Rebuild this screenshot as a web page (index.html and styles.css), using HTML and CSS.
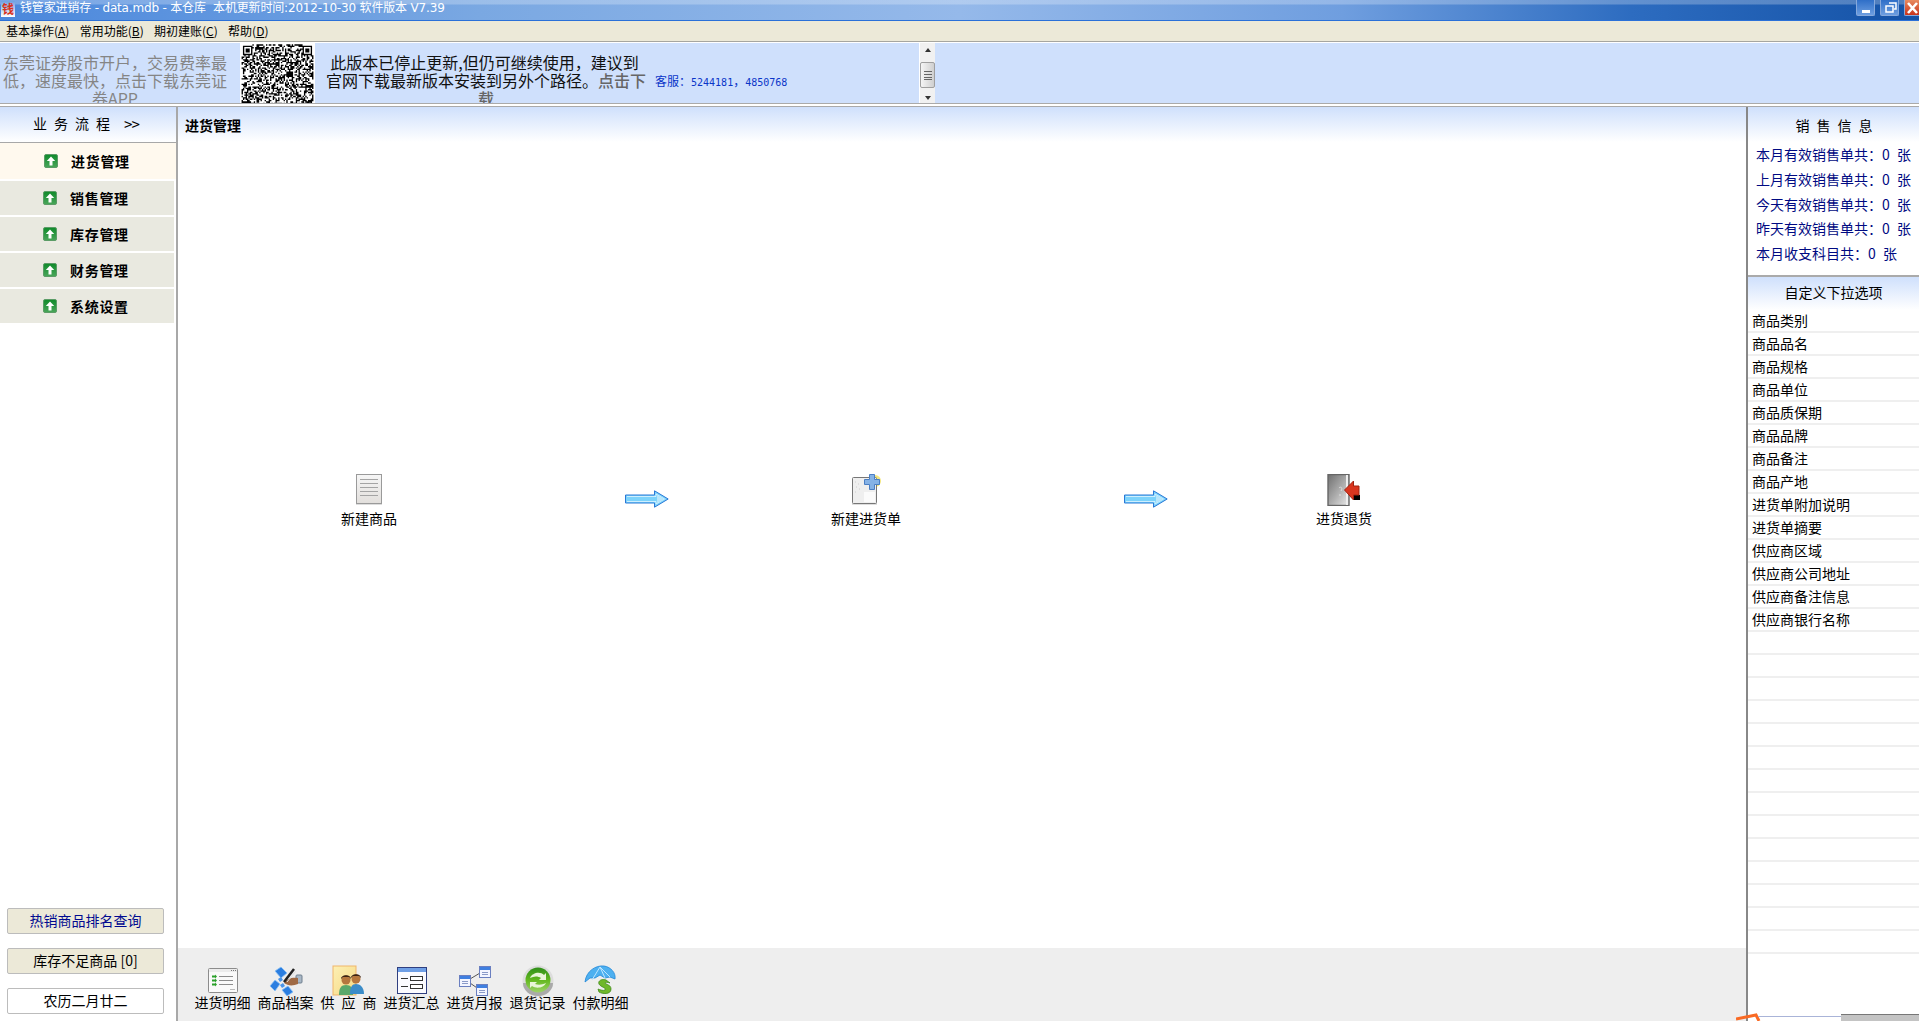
FILE: index.html
```html
<!DOCTYPE html>
<html lang="zh-CN">
<head>
<meta charset="utf-8">
<title>钱管家进销存</title>
<link rel="stylesheet" href="styles.css">
</head>
<body>
<header class="titlebar">
  <span class="app-logo">钱</span>
  <span class="title-text">钱管家进销存 - data.mdb - 本仓库&nbsp; 本机更新时间:2012-10-30 软件版本 V7.39</span>
  <div class="win-buttons">
    <span class="win-btn"><svg width="19" height="16" viewBox="0 0 19 16"><rect x="5" y="10" width="8" height="3" fill="#fff"/></svg></span>
    <span class="win-btn"><svg width="19" height="16" viewBox="0 0 19 16"><path d="M8 3h7v6h-2M5 6h7v6H5z" fill="none" stroke="#fff" stroke-width="1.5"/></svg></span>
    <span class="win-btn win-close"><svg width="15" height="16" viewBox="0 0 15 16"><path d="M3 3l9 10M12 3L3 13" stroke="#fff" stroke-width="2.6"/></svg></span>
  </div>
</header>
<nav class="menubar">
  <span>基本操作(<u>A</u>)</span>
  <span>常用功能(<u>B</u>)</span>
  <span>期初建账(<u>C</u>)</span>
  <span>帮助(<u>D</u>)</span>
</nav>
<section class="adband">
  <div class="ad-left">东莞证券股市开户，交易费率最低，速度最快，点击下载东莞证券APP</div>
  <svg class="qr" id="qr" width="75" height="61" viewBox="0 0 55 45"></svg>
  <div class="ad-mid"><span class="ad-l1">此版本已停止更新,但仍可继续使用，建议到</span><br>官网下载最新版本安装到另外个路径。<span class="ad-link">点击下载</span></div>
  <div class="ad-service">客服：<span class="mono">5244181</span>，<span class="mono">4850768</span></div>
  <div class="ad-scroll">
    <svg width="16" height="14" viewBox="0 0 16 14"><path d="M5 9l3-4 3 4z" fill="#333"/></svg>
    <div class="ad-thumb"><svg width="8" height="9" viewBox="0 0 8 9"><path d="M0 .5h8M0 3.5h8M0 6.5h8M0 8.5h8" stroke="#666"/></svg></div>
    <svg class="ad-down" width="16" height="12" viewBox="0 0 16 12"><path d="M5 4l3 4 3-4z" fill="#333"/></svg>
  </div>
</section>
<main class="workspace">
  <aside class="left">
    <div class="grad-head left-head"><span class="spaced">业务流程</span><span class="chev">&gt;&gt;</span></div>
    <ul class="modules">
      <li class="module active"><svg class="up" width="14" height="14" viewBox="0 0 14 14"><use href="#upicon"/></svg>进货管理</li>
      <li class="module"><svg class="up" width="14" height="14" viewBox="0 0 14 14"><use href="#upicon"/></svg>销售管理</li>
      <li class="module"><svg class="up" width="14" height="14" viewBox="0 0 14 14"><use href="#upicon"/></svg>库存管理</li>
      <li class="module"><svg class="up" width="14" height="14" viewBox="0 0 14 14"><use href="#upicon"/></svg>财务管理</li>
      <li class="module"><svg class="up" width="14" height="14" viewBox="0 0 14 14"><use href="#upicon"/></svg>系统设置</li>
    </ul>
    <div class="left-buttons">
      <div class="lbtn lbtn-blue">热销商品排名查询</div>
      <div class="lbtn">库存不足商品 [0]</div>
      <div class="lbtn lbtn-white">农历二月廿二</div>
    </div>
  </aside>

  <section class="center">
    <div class="grad-head center-head">进货管理</div>
    <div class="flow">
      <div class="flow-item fi-1">
        <svg width="30" height="32" viewBox="0 0 30 32">
          <defs><linearGradient id="g-paper" x1="0" y1="0" x2="0" y2="1"><stop offset="0" stop-color="#f6f6f6"/><stop offset="1" stop-color="#e2dfdc"/></linearGradient></defs>
          <rect x="2" y="29" width="26" height="2" fill="#ddd"/>
          <rect x="2.5" y="0.5" width="25" height="29" fill="url(#g-paper)" stroke="#9a9a9a"/>
          <path d="M6 5.5h18M6 9.5h18M6 13.5h18M6 17.5h18M6 21.5h18" stroke="#a4a4a4"/>
        </svg>
        <span>新建商品</span>
      </div>
      <svg class="flow-arrow fa-1" width="44" height="18" viewBox="0 0 44 18"><use href="#flowarrow"/></svg>
      <div class="flow-item fi-2">
        <svg width="30" height="32" viewBox="0 0 30 32">
          <circle cx="24" cy="7" r="6" fill="#f3e67c"/>
          <rect x="1" y="29" width="25" height="2" fill="#ddd"/>
          <rect x="1.5" y="3.5" width="24" height="26" rx="1" fill="#efefef" stroke="#777"/>
          <rect x="13" y="18" width="11" height="10" fill="#fbfbfb"/>
          <path d="M4 8h1M7 10h1M5 13h1M8 15h1M4 18h1" stroke="#ccc"/>
          <path d="M18.5 .5h5v5h5v5h-5v5h-5v-5h-5v-5h5z" fill="#85b2e6" stroke="#4b7fc4"/>
        </svg>
        <span>新建进货单</span>
      </div>
      <svg class="flow-arrow fa-2" width="44" height="18" viewBox="0 0 44 18"><use href="#flowarrow"/></svg>
      <div class="flow-item fi-3">
        <svg width="34" height="32" viewBox="0 0 34 32">
          <defs><linearGradient id="g-door" x1="0" y1="0" x2="1" y2="1"><stop offset="0" stop-color="#6f6f6f"/><stop offset=".55" stop-color="#b0b0b0"/><stop offset="1" stop-color="#ececec"/></linearGradient></defs>
          <rect x="1" y="0.5" width="21" height="31" fill="url(#g-door)" stroke="#666" stroke-width="1.4"/>
          <path d="M20 1v30" stroke="#eee" stroke-width="2"/>
          <path d="M12 14c2-2 4 0 2 3M13 20v2" stroke="#ddd" fill="none"/>
          <rect x="27" y="21" width="6" height="5" fill="#000"/>
          <path d="M17.500 16l9-9v5h5.500v9h-5.500v5z" fill="#d9361f" stroke="#a12210"/>
        </svg>
        <span>进货退货</span>
      </div>
    </div>
    <div class="toolbar">
      <div class="tool">
        <svg width="32" height="30" viewBox="0 0 32 30">
          <rect x="1.500" y="2.500" width="29" height="24" rx="1" fill="#fafafa" stroke="#8c8c8c"/>
          <path d="M2 3h28v3H2z" fill="#ececec"/><path d="M24 4.500h5" stroke="#777" stroke-dasharray="1 1"/>
          <path d="M12 10.500h14M12 14.500h14M12 18.500h14" stroke="#8d8d8d"/><path d="M23 23.500h5" stroke="#bbb"/>
          <path d="M5 10.500h3M5 14.500h3M5 18.500h3" stroke="#2aa02a" stroke-width="2"/>
          <path d="M8 8.500l2 2-2 2zM8 12.500l2 2-2 2zM8 16.500l2 2-2 2z" fill="#2aa02a"/>
        </svg>
        <span>进货明细</span>
      </div>
      <div class="tool">
        <svg width="34" height="30" viewBox="0 0 34 30">
          <path d="M6 5L12 1l6 6-6 5zM1 20l5-6 5 4-5 7zM13 24l6-4 5 6-6 4z" fill="#2b7ee0" stroke="#8cc2f5" stroke-width=".8"/>
          <path d="M9 13l3-2 2 3-3 2zM11 19l3-2 2 3-3 2z" fill="#4a94e8"/>
          <rect x="27" y="9" width="6" height="8" rx="1" fill="#a9b8c6" stroke="#6f7f8e"/>
          <path d="M15 17c3-5 9-6 14-5v6c-5 2-10 2-14-1z" fill="#a06a44"/>
          <path d="M15 16L25 3" stroke="#222" stroke-width="2.500"/>
          <path d="M18 16l9-11" stroke="#e0e0e0"/>
        </svg>
        <span>商品档案</span>
      </div>
      <div class="tool">
        <svg width="34" height="32" viewBox="0 0 34 32">
          <defs><linearGradient id="g-folder" x1="0" y1="0" x2="1" y2="1"><stop offset="0" stop-color="#fdf0b4"/><stop offset="1" stop-color="#f5d884"/></linearGradient></defs>
          <rect x="1" y="1" width="23" height="29" fill="url(#g-folder)" stroke="#f0b56a"/>
          <circle cx="14" cy="15" r="4.500" fill="#b5763d"/><path d="M9 14c0-5 10-5 10 0l-2-2h-6z" fill="#3d2414"/>
          <path d="M7 30c0-7 2-10 7-10s7 3 7 10z" fill="#5aa86a"/>
          <circle cx="24" cy="14" r="4.500" fill="#b5763d"/><path d="M19 13c0-5 10-5 10 0l-2-2h-6z" fill="#3d2414"/>
          <path d="M18 29c0-7 2-10 6-10s8 3 8 10z" fill="#3b8cc8"/>
        </svg>
        <span class="wide">供应商</span>
      </div>
      <div class="tool">
        <svg width="32" height="30" viewBox="0 0 32 30">
          <rect x="1.500" y="1.500" width="29" height="26" fill="#fbfbff" stroke="#2f3f80"/>
          <rect x="2" y="2" width="28" height="4" fill="#6f9fe6"/>
          <path d="M5 12.500h7M5 20.500h7" stroke="#333"/>
          <rect x="14.500" y="10.500" width="12" height="4" fill="#fff" stroke="#333"/>
          <rect x="14.500" y="18.500" width="12" height="4" fill="#fff" stroke="#333"/>
        </svg>
        <span>进货汇总</span>
      </div>
      <div class="tool">
        <svg width="32" height="32" viewBox="0 0 32 32">
          <path d="M11 14L21 8M11 18l10 7" stroke="#555"/>
          <rect x="20.500" y="1.500" width="11" height="11" fill="#f3f5ff" stroke="#6a7fc0"/><rect x="21" y="2" width="10" height="3" fill="#3f7fe0"/><path d="M23 7.500h6M23 9.500h6" stroke="#8a9ac8"/>
          <rect x="0.500" y="10.500" width="11" height="11" fill="#f3f5ff" stroke="#6a7fc0"/><rect x="1" y="11" width="10" height="3" fill="#3f7fe0"/><path d="M3 16.500h6M3 18.500h6" stroke="#8a9ac8"/>
          <rect x="17.500" y="19.500" width="11" height="11" fill="#f3f5ff" stroke="#6a7fc0"/><rect x="18" y="20" width="10" height="3" fill="#3f7fe0"/><path d="M20 25.500h6M20 27.500h6" stroke="#8a9ac8"/>
        </svg>
        <span>进货月报</span>
      </div>
      <div class="tool">
        <svg width="32" height="32" viewBox="0 0 32 32">
          <defs><linearGradient id="g-ball" x1="0" y1="0" x2="0" y2="1"><stop offset="0" stop-color="#2f8f1a"/><stop offset=".5" stop-color="#63b81f"/><stop offset="1" stop-color="#9ed36a"/></linearGradient></defs>
          <circle cx="16" cy="16" r="15.500" fill="#ddd"/>
          <path d="M1 18a15 13 0 0 0 30 0z" fill="#aaa"/>
          <circle cx="16" cy="15" r="12.500" fill="url(#g-ball)"/>
          <path d="M8 13c2-5 10-7 14-3l2-2v7h-7l2-2c-3-2-7-2-11 0z" fill="#e9f5d8"/>
          <path d="M24 18c-2 5-10 6-14 3l-2 2v-6h7l-2 2c3 1 7 1 11-1z" fill="#e9f5d8"/>
        </svg>
        <span>退货记录</span>
      </div>
      <div class="tool">
        <svg width="34" height="32" viewBox="0 0 34 32">
          <path d="M1 17C2 6 12 0 20 1c7 1 12 7 11 13l-5-2-5 1-5-3-5 3-5 0z" fill="#4db0f0" stroke="#1f86d8" stroke-width=".8"/>
          <path d="M8 15L16 2l5 11M16 2l10 10" stroke="#bfe6ff" fill="none"/>
          <path d="M22 15c-6-2-10 3-5 6 3 2 5 2 4 4-1 1-5 0-7-1l1 3c3 2 12 3 12-3 0-4-4-4-6-6 0-1 3-1 5 0z" fill="#6fb82a" stroke="#3f8a18" stroke-width=".8"/>
        </svg>
        <span>付款明细</span>
      </div>
    </div>
  </section>

  <aside class="right">
    <div class="grad-head right-head"><span class="spaced">销售信息</span></div>
    <ul class="stats">
      <li>本月有效销售单共：0 张</li>
      <li>上月有效销售单共：0 张</li>
      <li>今天有效销售单共：0 张</li>
      <li>昨天有效销售单共：0 张</li>
      <li>本月收支科目共：0 张</li>
    </ul>
    <div class="grad-head custom-head">自定义下拉选项</div>
    <ul class="options">
      <li>商品类别</li><li>商品品名</li><li>商品规格</li><li>商品单位</li>
      <li>商品质保期</li><li>商品品牌</li><li>商品备注</li><li>商品产地</li>
      <li>进货单附加说明</li><li>进货单摘要</li><li>供应商区域</li><li>供应商公司地址</li>
      <li>供应商备注信息</li><li>供应商银行名称</li>
      <li></li><li></li><li></li><li></li><li></li><li></li><li></li><li></li><li></li>
      <li></li><li></li><li></li><li></li><li></li>
    </ul>
  </aside>
</main>

<svg class="overlay-scribble" width="30" height="10" viewBox="0 0 30 10"><path d="M0 8l20-4 3 6" fill="none" stroke="#f96a24" stroke-width="3"/></svg>
<div class="overlay-line"></div>
<div class="overlay-bar"></div>

<svg width="0" height="0" class="defs">
  <defs>
    <linearGradient id="g-up" x1="0" y1="0" x2="0" y2="1"><stop offset="0" stop-color="#0f8a2a"/><stop offset="1" stop-color="#4aa65a"/></linearGradient>
    <symbol id="upicon" viewBox="0 0 14 14">
      <rect x="0.500" y="0.500" width="13" height="13" rx="1.500" fill="url(#g-up)" stroke="#5b9c66"/>
      <path d="M7 2.500l4.200 4.500H8.500v4.500h-3V7H2.800z" fill="#fff"/>
    </symbol>
    <symbol id="flowarrow" viewBox="0 0 44 18">
      <path d="M.5 5h29V.8L43.200 9 29.500 17.200V13H.5z" fill="#7cd3fb" stroke="#2a78d6"/>
      <path d="M2 6.500h29V4l8.500 5-8.500 5v-2.500H2" fill="none" stroke="#e3f6ff" stroke-width=".8"/>
      <path d="M32 5l7 4-7 4z" fill="#b8e6fb"/>
    </symbol>
  </defs>
</svg>
<script src="qr.js"></script>
</body>
</html>
```
FILE: styles.css
```css
* { box-sizing: border-box; }
html, body { margin: 0; padding: 0; }
body {
  width: 1919px;
  height: 1021px;
  overflow: hidden;
  display: flex;
  flex-direction: column;
  position: relative;
  background: #fff;
  color: #000;
  font: 14px/1.2 "Noto Sans CJK SC", "Liberation Sans", sans-serif;
}
ul { list-style: none; margin: 0; padding: 0; }
.defs { position: absolute; }

.titlebar {
  flex: 0 0 21px;
  display: flex;
  align-items: flex-start;
  border-bottom: 1px solid #2a70d8;
  background:
    linear-gradient(to bottom, rgba(255,255,255,.25) 0, rgba(255,255,255,.25) 4px, rgba(255,255,255,0) 5px),
    linear-gradient(to right, #4a87dc 0, #7aa8e2 25%, #95b9ea 50%, #6f9edf 70%, #2d6cc0 85%, #1452a6 100%);
}
.app-logo {
  width: 14px; height: 16px; margin: 1px 0 0 1px;
  background: linear-gradient(to bottom, #6fa0e0, #fff);
  color: #d8321a; font-size: 12px; font-weight: 700; line-height: 16px; text-align: center;
  flex: none;
}
.title-text {
  margin-left: 5px; color: #fff; font-size: 12px; line-height: 16px; white-space: pre;
  font-family: "DejaVu Sans", "Noto Sans CJK SC", sans-serif;
  letter-spacing: -.17px;
}
.win-buttons { margin-left: auto; display: flex; gap: 5px; }
.win-btn {
  width: 19px; height: 16px; display: block; border: 1px solid #86a9dc; border-top: 0; border-radius: 0 0 2px 2px;
  background: linear-gradient(to bottom, #2f6fc8, #6d9ee0);
  line-height: 0;
}
.win-close { width: 15px; background: linear-gradient(to bottom, #e88b60, #c9331a); border-right: 0; border-radius: 0 0 0 2px; }

.menubar {
  flex: 0 0 21px;
  display: flex;
  gap: 10.300px;
  padding: 0 0 0 6px;
  align-items: center;
  background: #ece9d8;
  border-bottom: 1px solid #a6a6a0;
  font-size: 12px;
  line-height: 20px;
}

.adband {
  flex: 0 0 64px;
  display: flex;
  margin-top: 1px;
  background: #cfe0fc;
  background-clip: content-box;
  padding-bottom: 2px;
  border-bottom: 1px solid #aaa;
  position: relative;
  overflow: hidden;
}
.adband::after { content: ""; position: absolute; left: 0; right: 0; bottom: 0; height: 2px; background: #fff; border-top: 1px solid #aaa; }
.ad-left {
  width: 232px; padding: 10px 4px 0 2px; color: #858585; font-size: 16px; line-height: 18px; text-align: center; height: 61px; overflow: hidden;
  word-break: break-all; flex: none;
}
.qr { flex: none; margin-left: 8px; background: #fff; }
.ad-mid {
  width: 328px; margin-left: 7px; padding-top: 10px; font-size: 16px; line-height: 18px; text-align: center; height: 61px; overflow: hidden; flex: none; word-break: break-all; color: #111;
}
.ad-l1 { margin-left: -3px; }
.ad-link { color: #666; font-weight: 500; }
.ad-service { margin-left: 5px; padding-top: 30px; color: #0a35c8; font-size: 12px; line-height: 16px; flex: none; width: 264px; height: 61px; white-space: nowrap; }
.mono { font: 10px/16px "DejaVu Sans Mono", monospace; }
.ad-scroll {
  position: absolute; left: 919px; top: 0; width: 16px; height: 61px;
  background: #f1f1f1; border-left: 1px solid #fff; line-height: 0;
}
.ad-thumb { margin: 5px 1px 0 0; height: 26px; width: 15px; border: 1px solid #9f9f9f; border-radius: 2px; background: linear-gradient(to right, #f5f5f5, #cfcfcf); display: flex; align-items: center; justify-content: center; }
.ad-down { position: absolute; left: 0; bottom: 0; }

.workspace { flex: 1; display: flex; min-height: 0; }
.grad-head {
  height: 35px;
  background: linear-gradient(to bottom, #cfe0fc 0, #fff 100%);
}
.spaced { letter-spacing: 7px; }

.left {
  flex: 0 0 178px;
  border-right: 2px solid #a8a8a8;
  display: flex;
  flex-direction: column;
  min-height: 0;
}
.left-head { height: 36px; border-bottom: 1px solid #a8a8a8; padding: 6px 0 0 33px; line-height: 20px; }
.chev { margin-left: 7px; font-family: "DejaVu Sans Mono", monospace; letter-spacing: -1px; font-weight: 300; }
.modules { display: flex; flex-direction: column; gap: 2px; }
.module {
  height: 34px; width: 174px;
  display: flex; align-items: center;
  padding-left: 43px;
  background: #e9e9e0;
  font-weight: 700;
  letter-spacing: .7px;
}
.module.active { background: #fff9ee; width: 176px; height: 36px; padding-left: 44px; }
.up { margin-right: 13px; flex: none; }
.left-buttons { margin-top: auto; padding: 0 0 7px 7px; display: flex; flex-direction: column; gap: 14px; }
.lbtn {
  width: 157px; height: 26px;
  border: 1px solid #bcbcbc; border-radius: 2px;
  background: #ece9d8;
  text-align: center; line-height: 23px;
}
.lbtn-blue { color: #000a90; }
.lbtn-white { background: #fff; }

.center { flex: 0 0 1568px; display: flex; flex-direction: column; min-height: 0; }
.center-head { padding: 8px 0 0 7px; font-weight: 700; font-size: 14px; line-height: 20px; }
.flow { flex: 1; display: flex; align-items: flex-start; padding: 332px 0 0 131px; }
.flow-item { width: 120px; display: flex; flex-direction: column; align-items: center; flex: none; line-height: 20px; }
.flow-item svg { height: 32px; margin-bottom: 2px; }
.flow-arrow { flex: none; margin-top: 16px; }
.fa-1 { margin-left: 196px; }
.fi-2 { margin-left: 137px; }
.fa-2 { margin-left: 198px; }
.fi-3 { margin-left: 116px; }
.toolbar {
  flex: 0 0 73px;
  background: #eee;
  display: flex;
  padding: 17px 0 0 13px;
}
.tool { width: 63px; height: 56px; display: flex; flex-direction: column; align-items: center; justify-content: flex-start; line-height: 18px; }
.tool svg { height: 32px; flex: none; margin-bottom: -4px; }
.tool .wide { letter-spacing: 7px; margin-right: -7px; }

.right { flex: 0 0 173px; border-left: 2px solid #888; display: flex; flex-direction: column; min-height: 0; }
.right-head { text-align: center; padding-top: 8px; line-height: 20px; height: 35px; padding-left: 8px; }
.stats { height: 133px; padding: 0 0 0 8px; color: #000a82; }
.stats li { height: 24.800px; line-height: 25px; white-space: nowrap; word-spacing: 4px; }
.custom-head { border-top: 2px solid #aaa; height: 35px; text-align: center; padding-top: 5px; line-height: 20px; }
.options { flex: 1; overflow: hidden; }
.options li { height: 23px; line-height: 21px; padding-left: 4px; border-bottom: 2px solid #efefef; }

.overlay-scribble { position: absolute; left: 1736px; top: 1011px; }
.overlay-line { position: absolute; left: 1758px; top: 1016px; width: 83px; height: 1px; background: #aab4d8; }
.overlay-bar { position: absolute; left: 1841px; top: 1014px; width: 78px; height: 7px; background: #c4c4c4; border-top: 1px solid #777; }
```
FILE: qr.js
```js
(function () {
  var n = 55, s = "", seed = 7391;
  function rnd() { seed = (seed * 1103515 + 12345) & 0x7fffffff; return (seed >> 12) & 1; }
  function finder(x, y) {
    s += "M" + x + " " + y + "h7v7h-7zM" + (x + 1) + " " + (y + 1) + "v5h5v-5zM" + (x + 2) + " " + (y + 2) + "h3v3h-3z";
  }
  for (var y = 1; y < n - 1; y++) {
    for (var x = 1; x < n - 1; x++) {
      var inTL = x < 9 && y < 9, inTR = x > n - 10 && y < 9, inBL = x < 9 && y > n - 10;
      if (!inTL && !inTR && !inBL && rnd()) s += "M" + x + " " + y + "h1v1h-1z";
    }
  }
  finder(2, 2); finder(n - 9, 2); finder(2, n - 9);
  var p = document.createElementNS("http://www.w3.org/2000/svg", "path");
  p.setAttribute("d", s);
  p.setAttribute("fill-rule", "evenodd");
  p.setAttribute("fill", "#000");
  document.getElementById("qr").appendChild(p);
})();
```
